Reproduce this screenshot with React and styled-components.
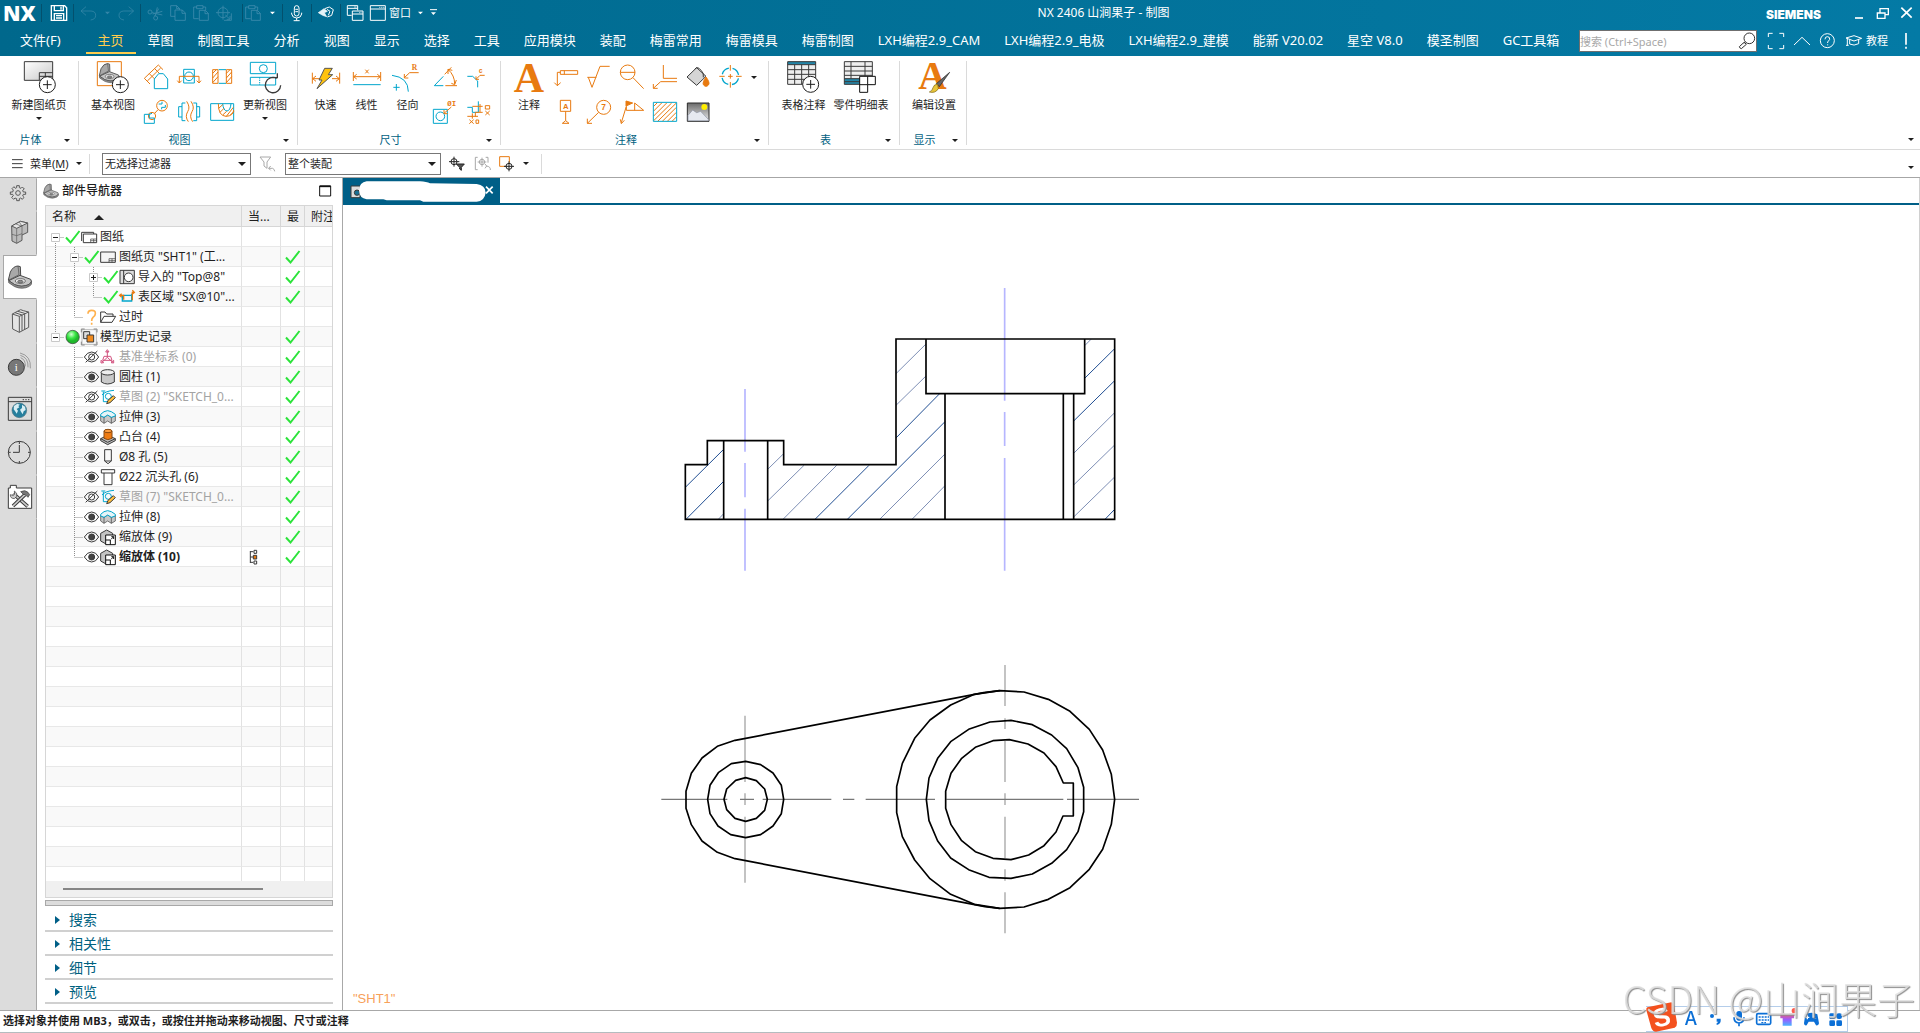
import React from "react";
import styled, { createGlobalStyle } from "styled-components";

const O = "#e87a10";
const C = "#00a5cc";
const K = "#3a3a3a";
const UI = '"Noto Sans", "Noto Sans CJK SC", sans-serif';

const Global = createGlobalStyle`
  * { box-sizing: border-box; }
  body { margin: 0; background: #fff; font-family: ${UI}; color: #1e1e1e; }
  button, input, select { font-family: inherit; margin: 0; }
  svg { display: block; flex: none; }
`;

/* ---------- shared parts ---------- */

const Shell = styled.div`
  display: flex;
  flex-direction: column;
  height: 100vh;
  overflow: hidden;
`;

const PlainButton = styled.button`
  display: flex;
  align-items: center;
  justify-content: center;
  flex: none;
  padding: 0;
  border: 0;
  background: none;
  color: inherit;
  font-size: 11px;
  line-height: 16px;
  white-space: nowrap;
`;

/* Icons are drawn on a grid three times finer than their displayed size. */
const ArtSvg = styled.svg`
  overflow: visible;
`;

const Art = ({ x = 0, y = 0, w, h, children, color = O, sw = 3 }) => (
  <ArtSvg
    width={w}
    height={h}
    viewBox={`${x} ${y} ${w * 3} ${h * 3}`}
    fill="none"
    stroke={color}
    strokeWidth={sw}
    aria-hidden="true"
  >
    {children}
  </ArtSvg>
);

const Caret = ({ color = "#1e1e1e", w = 6 }) => (
  <svg width={w} height={w / 2} viewBox="0 0 6 3" aria-hidden="true">
    <path d="M0 0H6L3 3Z" fill={color} />
  </svg>
);

/* ---------- header ---------- */

const Header = styled.header`
  flex: none;
  color: #fff;
  background: linear-gradient(90deg, #00688c, #047aa5);
`;

const TitleRow = styled.div`
  display: flex;
  align-items: center;
  height: 28px;
`;

const Logo = styled.div`
  width: 41px;
  padding: 0 0 2px 3px;
  font: 800 21px/24px "Open Sans", sans-serif;
`;

const QuickSep = styled.span`
  width: 1px;
  height: 18px;
  margin-bottom: 2px;
  background: #03506d;
`;

const QuickButton = styled(PlainButton)`
  height: 28px;
`;

const WindowLabel = styled.span`
  width: 26px;
  padding-bottom: 3px;
  text-align: left;
`;

const Title = styled.h1`
  flex: 1;
  margin: 0;
  padding-bottom: 2px;
  font-size: 12px;
  font-weight: 400;
  line-height: 18px;
  text-align: center;
`;

const Brand = styled.span`
  width: 82px;
  padding-top: 1px;
  font: 900 12px/18px Inter, sans-serif;
`;

const TabRow = styled.nav`
  display: flex;
  align-items: stretch;
  height: 28px;
`;

const Tab = styled(PlainButton)`
  margin-right: ${(p) => (p.$file ? 17 : 0)}px;
  padding: 0 ${(p) => (p.$file ? 8 : 12)}px 4px ${(p) => (p.$file ? 20 : 12)}px;
  font-size: 13px;
  line-height: 20px;
  color: ${(p) => (p.$active ? "#ffcc4d" : "#fff")};
  box-shadow: ${(p) => (p.$active ? "inset 0 -2px #00698d, inset 0 -4px #ffcc4d" : "none")};
`;

const SearchBox = styled.label`
  display: flex;
  align-items: center;
  flex: none;
  width: 178px;
  height: 22px;
  margin: 2px 2px 0 auto;
  border: 1px solid #6f6f6f;
  background: #fff;

  input {
    flex: 1;
    min-width: 0;
    height: 18px;
    padding: 0;
    border: 0;
    outline: 0;
    font-size: 11px;
    background: none;
  }
  input::placeholder {
    color: #a8a8a8;
    opacity: 1;
  }
`;

const HeaderButton = styled(PlainButton)`
  height: 28px;
`;

const TutorialLabel = styled.span`
  width: 31px;
  padding-bottom: 2px;
  text-align: left;
`;

const Q = "#4a93b3";
const quick = [
  "|",
  { n: "保存", x: 42, w: 31, art: <g stroke="#fff" strokeWidth="4"><path d="M154 17H194L200 23V61H154ZM163 17V32H190V17M183 20V29M163 61V41H191V61M168 47H186M168 54H186" /></g> },
  "|",
  { n: "撤消", x: 74, w: 27, art: <path d="M258 20L243 33L258 46M244 33H273Q287 34 287 46Q287 58 272 60" stroke={Q} opacity=".55" /> },
  { n: "撤消列表", x: 101, w: 13, art: <path d="M315 35H330L322 43Z" fill={Q} stroke="none" opacity=".7" /> },
  { n: "重做", x: 114, w: 26, art: <path d="M386 20L401 33L386 46M400 33H371Q357 34 357 46Q357 58 372 60" stroke={Q} opacity=".55" /> },
  "|",
  { n: "剪切", x: 141, w: 26, art: <g stroke={Q} opacity=".7"><circle cx="450" cy="36" r="6" /><circle cx="467" cy="54" r="6" /><path d="M456 38L487 45M466 48L472 22M458 42L487 34M464 48L476 26" /></g> },
  { n: "复制", x: 167, w: 23, art: <g stroke={Q} opacity=".7"><path d="M525 49H512V17H530L539 26V30M530 17V26H539M525 30H547L556 39V61H525ZM546 30V40H556" /></g> },
  { n: "粘贴", x: 190, w: 23, art: <g stroke={Q} opacity=".7"><path d="M596 56H581V21H590M609 21H617V30M590 17H609V26H590ZM598 31H616L625 40V61H598ZM615 31V41H625" /></g> },
  { n: "移动对象", x: 213, w: 29, art: <g stroke={Q} opacity=".7"><circle cx="669" cy="38" r="15" /><path d="M669 17V59M648 38H690M672 61H694V40M676 45L690 58M690 48V58H680" /></g> },
  "|",
  { n: "选择性粘贴", x: 243, w: 22, art: <g stroke={Q} opacity=".7"><path d="M752 56H737V21H746M765 21H773V30M746 17H765V26H746ZM754 31H772L781 40V61H754ZM771 31V41H781" /></g> },
  { n: "粘贴列表", x: 265, w: 17, art: <path d="M810 35H825L817 43Z" fill="#fff" stroke="none" /> },
  "|",
  { n: "语音", x: 283, w: 28, art: <g stroke="#fff"><rect x="883" y="17" width="14" height="31" rx="7" /><path d="M875 38V42Q877 54 890 54Q903 54 905 42V38M890 54V62M881 62H899M886 28H894M886 35H894" /></g> },
  "|",
  { n: "触摸模式", x: 312, w: 28, art: <g stroke="#fff"><path d="M974 26L988 21L1000 29L995 46L982 51" /><path d="M981 28L990 34L985 46" /><path d="M955 38L972 26L982 34L973 38L980 50L968 46Z" fill="#e4f2f7" strokeWidth="2" /></g> },
  "|",
  { n: "切换窗口", x: 341, w: 26, art: <g stroke="#fff"><path d="M1055 46H1042V17H1073V31M1042 25H1073M1057 33H1089V61H1057ZM1057 42H1089" /><path d="M1062 21H1071M1078 38H1087" strokeDasharray="2 2" /></g> },
];

const QuickAccess = () => (
  <>
    <Logo>NX</Logo>
    {quick.map((q, i) =>
      q === "|" ? (
        <QuickSep key={i} />
      ) : (
        <QuickButton key={i} aria-label={q.n}>
          <Art x={q.x * 3} y={0} w={q.w} h={28}>{q.art}</Art>
        </QuickButton>
      )
    )}
    <QuickButton>
      <Art x={1101} w={22} h={28} color="#fff"><path d="M1111 17H1156V61H1111ZM1111 27H1156" /><path d="M1138 22H1153" strokeDasharray="3 3" /></Art>
      <WindowLabel>窗口</WindowLabel>
    </QuickButton>
    <QuickButton aria-label="窗口列表">
      <Art x={1242} w={12} h={28}><path d="M1251 35H1266L1258 43Z" fill="#fff" stroke="none" /></Art>
    </QuickButton>
    <QuickButton aria-label="工具条选项">
      <Art x={1278} w={14} h={28} color="#fff"><path d="M1287 29H1308" /><path d="M1290 37H1305L1297 45Z" fill="#fff" stroke="none" /></Art>
    </QuickButton>
  </>
);

const tabs = [
  "文件(F)", "主页", "草图", "制图工具", "分析", "视图", "显示", "选择", "工具", "应用模块", "装配",
  "梅雷常用", "梅雷模具", "梅雷制图", "LXH编程2.9_CAM", "LXH编程2.9_电极", "LXH编程2.9_建模",
  "能新 V20.02", "星空 V8.0", "模圣制图", "GC工具箱",
];

/* ---------- ribbon ---------- */

const Ribbon = styled.section`
  display: flex;
  flex: none;
  height: 94px;
  padding: 5px 0 4px;
  border-bottom: 1px solid #dadada;
`;

const Group = styled.div`
  display: flex;
  flex-direction: column;
  flex: none;
  border-right: 1px solid #dadada;
`;

const GroupBody = styled.div`
  display: flex;
  flex: 1;
  align-items: flex-start;
  padding: 0 ${(p) => p.$right}px 0 ${(p) => p.$left}px;
`;

const GroupFoot = styled.div`
  display: flex;
  align-items: center;
  height: 16px;
  margin-bottom: -3px;
  padding-right: 8px;
  font-size: 11px;
  line-height: 16px;
  color: #00617f;

  span {
    flex: 1;
    padding-right: 3px;
    text-align: center;
  }
`;

const BigButton = styled(PlainButton)`
  flex-direction: column;
  width: ${(p) => p.$w}px;
`;

const BigLabel = styled.span`
  padding-bottom: 4px;
`;

const IconGrid = styled.div`
  display: grid;
  grid-template-columns: repeat(${(p) => p.$cols}, 33px);
  grid-auto-rows: 35px;
`;

const MoreButton = styled(PlainButton)`
  width: 14px;
  height: 32px;
`;

const RibbonEnd = styled.div`
  display: flex;
  flex: 1;
  align-items: flex-end;
  justify-content: flex-end;
  padding: 0 6px 4px 0;
`;

const Plus = ({ x, y }) => (
  <g stroke="#1e1e1e">
    <circle cx={x} cy={y} r="24" fill="#fff" />
    <path d={`M${x - 13} ${y}H${x + 13}M${x} ${y - 13}V${y + 13}`} />
  </g>
);

const Big = ({ x, w, label, menu, children }) => (
  <BigButton $w={w}>
    <Art x={x} y={183} w={w} h={36}>{children}</Art>
    <BigLabel>{label}</BigLabel>
    {menu && <Caret />}
  </BigButton>
);

const Small = ({ x, row, label, children }) => (
  <PlainButton aria-label={label}>
    <Art x={x} y={row ? 288 : 183} w={33} h={35}>{children}</Art>
  </PlainButton>
);

const RibbonGroup = ({ label, left = 0, right = 0, children }) => (
  <Group>
    <GroupBody $left={left} $right={right}>{children}</GroupBody>
    <GroupFoot>
      <span>{label}</span>
      <Caret />
    </GroupFoot>
  </Group>
);

const Bracket = ({ s = 1, x = 0, y = 0 }) => (
  <g transform={`translate(${x} ${y}) scale(${s})`} stroke="#4a4a4a" strokeWidth="3" strokeLinejoin="round">
    <path d="M1 44L7 20Q16 2 30 2L37 4L38 30L10 50Z" fill="#a8a8a8" />
    <path d="M30 2L33 28L3 44" strokeWidth="2" />
    <path d="M2 46L36 30L68 42Q75 48 64 57Q42 68 20 58Z" fill="#c4c4c4" />
    <path d="M2 46V52L20 64Q44 74 64 63Q74 57 70 48Q68 56 60 59Q40 67 20 58Z" fill="#8c8c8c" strokeWidth="2" />
    <ellipse cx="37" cy="47" rx="15" ry="7" fill="#e6e6e6" strokeWidth="2" />
    <ellipse cx="37" cy="49" rx="8" ry="4" fill="#8c8c8c" strokeWidth="2" />
  </g>
);

const RibbonBar = () => (
  <Ribbon aria-label="主页">
    <RibbonGroup label="片体">
      <Big x={0} w={78} label="新建图纸页" menu>
        <defs>
          <linearGradient id="sheet" x1="0" y1="0" x2="1" y2="1"><stop offset="0" stopColor="#fff" /><stop offset="1" stopColor="#c8c8c8" /></linearGradient>
        </defs>
        <path d="M73 185H158V241H73Z" fill="url(#sheet)" stroke={K} />
        <path d="M118 240V218H158M118 229H158M136 218V240" stroke={K} />
        <Plus x={142} y={254} />
      </Big>
    </RibbonGroup>

    <RibbonGroup label="视图" left={8} right={5}>
      <Big x={261} w={52} label="基本视图">
        <path d="M292 185H364V257H292Z" />
        <Bracket x={297} y={189} s={0.86} />
        <Plus x={361} y={254} />
      </Big>
      <IconGrid $cols={3}>
        <Small x={417} label="投影视图"><path d="M433 235L475 195L489 209M433 235L450 252M448 221L464 237M464 206L478 220M442 243L482 204" /><path d="M463 237L476 221H490L503 237V266H463Z" stroke={C} /></Small>
        <Small x={516} label="剖视图"><path d="M551 208H583V249H551Z" stroke={C} /><circle cx="567" cy="229" r="13" stroke={C} /><path d="M538 229V249M532 242L538 249L545 242M538 229H597V249M590 242L597 249L603 242" /></Small>
        <Small x={615} label="断开视图"><path d="M638 209H654V250H638ZM679 209H695V250H679Z" /><path d="M638 220L649 209M638 234L654 216M638 248L654 230M679 220L690 209M679 234L695 216M679 248L695 230" /><path d="M656 209H678M656 250H678" stroke={C} /></Small>
        <Small row x={417} label="局部放大图"><circle cx="486" cy="317" r="16" /><circle cx="456" cy="348" r="11" /><path d="M464 340L474 329" /><path d="M476 312H486V305M496 315V322H485V328M433 343H448V354H463V370H433ZM448 343L456 340" stroke={C} /></Small>
        <Small row x={516} label="断裂视图"><path d="M556 309H546V362H556M546 320H536V351H546M580 309H590V362H580M590 320H599V351H590" stroke={C} /><path d="M560 304Q572 322 563 335Q554 350 565 365M573 304Q585 322 576 335Q567 350 578 365" /></Small>
        <Small row x={615} label="局部剖视图"><path d="M632 311H701V361H632Z" stroke={C} /><path d="M655 311Q655 348 678 349Q700 348 701 330" /><path d="M668 311Q670 332 681 333Q691 332 693 311" stroke={C} /><path d="M656 325L668 314M660 337L672 325M668 345L680 334M679 349L700 322M691 345L701 335" /></Small>
      </IconGrid>
      <Big x={714} w={54} label="更新视图" menu>
        <path d="M751 187H827V221H751ZM751 232H827V255H751Z" stroke={C} /><circle cx="790" cy="206" r="12" stroke={C} /><path d="M779 232V255" stroke={C} strokeDasharray="4 3" />
        <path d="M830 235A23 23 0 1 0 842 256M818 233H832V220" stroke={K} strokeWidth="4" />
      </Big>
    </RibbonGroup>

    <RibbonGroup label="尺寸" left={7} right={6}>
      <Big x={915} w={41} label="快速">
        <path d="M937 218V251M1019 218V251M938 236H960M948 228L938 236L948 244M996 236H1018M1008 228L1018 236L1008 244" />
        <path d="M974 205H997L985 224H998L951 266L966 240H957Z" fill="#ffc20e" stroke="#555" />
      </Big>
      <Big x={1038} w={41} label="线性">
        <path d="M1060 216V243M1142 216V243M1061 230H1141M1070 223L1061 230L1070 237M1132 223L1141 230L1132 237M1096 209L1106 220M1106 209L1096 220" />
        <path d="M1060 254H1142" stroke={C} />
      </Big>
      <Big x={1161} w={41} label="径向">
        <path d="M1176 226Q1225 232 1225 275M1180 262H1199M1189 252V272" stroke={C} />
        <path d="M1256 218H1229L1213 233M1213 222V234H1225" /><text x="1235" y="211" fontSize="23" fontWeight="700" fill={O} stroke="none" fontFamily="Liberation Serif, serif">R</text>
      </Big>
      <IconGrid $cols={2}>
        <Small x={1284} label="角度"><path d="M1303 257L1330 229M1303 257H1330" stroke={C} /><path d="M1334 223L1354 202M1336 257H1371M1344 208Q1364 226 1364 252M1344 222V208L1357 211M1354 250L1364 254L1369 240" /></Small>
        <Small x={1383} label="倒斜角"><path d="M1402 229H1418L1433 243V262" stroke={C} /><path d="M1454 226H1440L1428 238M1428 229V238H1437" /><text x="1436" y="220" fontSize="20" fontWeight="700" fill={O} stroke="none" fontFamily="Liberation Mono, monospace">c</text></Small>
        <Small row x={1284} label="孔和螺纹标注"><path d="M1300 328H1342V370H1300Z" stroke={C} /><circle cx="1321" cy="349" r="13" stroke={C} /><path d="M1354 321L1332 340M1332 330V341H1343" /><text x="1342" y="317" fontSize="22" fontWeight="700" fill={O} stroke="none" fontFamily="Liberation Mono, monospace">ØI</text></Small>
        <Small row x={1383} label="坐标"><path d="M1402 322H1417V337H1435V304" stroke={C} /><path d="M1417 319H1448M1440 312V337M1448 337H1426V350M1402 349H1434M1417 340V356M1456 317H1469V327H1456ZM1456 333L1469 345M1469 333L1456 345M1408 359L1421 371M1421 359L1408 371M1428 360H1436V370H1428Z" /></Small>
      </IconGrid>
    </RibbonGroup>

    <RibbonGroup label="注释" left={8} right={7}>
      <Big x={27} w={40} label="注释">
        <text x="87" y="275" fontSize="126" fontWeight="700" textAnchor="middle" fill={O} stroke="none" fontFamily="Liberation Serif, serif">A</text>
      </Big>
      <IconGrid $cols={6}>
        <Small x={147} label="特征控制框"><path d="M181 212H233V223H181ZM193 212V223M181 217H172V257M163 248L172 257L182 248" /></Small>
        <Small x={246} label="表面粗糙度"><path d="M262 232H289M265 232L276 262L300 199H329" /></Small>
        <Small x={345} label="基准目标"><circle cx="383" cy="217" r="22" /><path d="M361 217H405M399 233L431 266" /></Small>
        <Small x={444} label="焊接符号"><path d="M490 195V235H531M531 245H482L460 265M460 252V265H473" /></Small>
        <Small x={543} label="填充"><path d="M561 231L590 203L618 229L590 256Z" fill="#d5d5d5" stroke={K} /><path d="M584 208Q592 196 604 212Q612 218 610 232" stroke={K} /><path d="M618 231Q630 247 626 254Q618 264 610 254Q607 247 618 231Z" fill={O} /></Small>
        <Small x={642} label="中心标记"><circle cx="691" cy="229" r="25" stroke={C} strokeDasharray="28 11.270" strokeDashoffset="-6" strokeWidth="4" /><path d="M691 195V212M691 222V236M691 246V263M658 229H674M684 229H698M708 229H725" /></Small>
        <Small row x={147} label="基准特征符号"><path d="M181 301H212V334H181ZM197 334V362M187 370H207L197 362Z" /><text x="197" y="327" fontSize="23" fontWeight="700" textAnchor="middle" fill={O} stroke="none" fontFamily="Liberation Sans, sans-serif">A</text></Small>
        <Small row x={246} label="符号标注"><circle cx="311" cy="322" r="21" /><path d="M296 337L262 370M262 356V370H276" /><text x="311" y="331" fontSize="25" fontWeight="700" textAnchor="middle" fill={O} stroke="none" fontFamily="Liberation Sans, sans-serif">7</text></Small>
        <Small row x={345} label="焊接标注"><path d="M379 331H431L404 309V331M379 331V319L364 368M361 358L364 371L373 361" /><path d="M378 303L398 309L378 318Z" fill={O} /></Small>
        <Small row x={444} label="剖面线"><path d="M461 319L472 308M461 333L486 308M461 348L500 309M461 362L515 309M473 364L529 309M487 364L529 322M502 364L529 337M516 364L529 351" /><path d="M460 307H530V364H460Z" stroke={C} /></Small>
        <Small row x={543} label="图像"><defs><linearGradient id="sky" x1="0" y1="0" x2="0" y2="1"><stop offset="0" stopColor="#6a6a6a" /><stop offset="1" stopColor="#eee" /></linearGradient></defs><path d="M562 309H627V364H562Z" fill="url(#sky)" stroke="#2a2a2a" /><path d="M564 362V346L578 330L590 338L602 334L625 358V362Z" fill="#e6e9f0" stroke="#8a90a0" strokeWidth="2" /><circle cx="613" cy="321" r="9" fill="#ffee00" stroke="none" /></Small>
      </IconGrid>
      <MoreButton aria-label="更多注释"><Caret /></MoreButton>
    </RibbonGroup>

    <RibbonGroup label="表" left={6} right={9}>
      <Big x={825} w={57} label="表格注释">
        <path d="M863 185H947V253H863Z" fill="#eee" stroke="none" /><path d="M863 185H947V194H863Z" fill="#2385a8" stroke="none" />
        <path d="M863 185H947V253H863ZM863 194H947M863 209H947M863 223H947M863 238H947M884 194V253M905 194V253M926 194V253" stroke={K} />
        <Plus x={932} y={253} />
      </Big>
      <Big x={996} w={58} label="零件明细表">
        <path d="M1033 185H1117V253H1033Z" fill="#eee" stroke="none" /><path d="M1033 236H1117V253H1033Z" fill="#2385a8" stroke="none" />
        <path d="M1033 185H1117V253H1033ZM1033 199H1117M1033 213H1117M1033 226H1117M1033 236H1117M1053 185V236M1095 185V236M1033 245H1080" stroke={K} />
        <path d="M1079 229H1126V254H1103V277H1079ZM1079 254H1103M1103 229V254" fill="#fff" stroke="#111" />
      </Big>
    </RibbonGroup>

    <RibbonGroup label="显示" left={5} right={3}>
      <Big x={1215} w={58} label="编辑设置">
        <text x="1297" y="267" fontSize="118" fontWeight="700" textAnchor="middle" fill={O} stroke="none" fontFamily="Liberation Serif, serif">A</text>
        <path d="M1349 217L1309 251L1318 260Z" fill="#666" stroke="#222" strokeWidth="2" />
        <path d="M1313 253Q1302 252 1299 263Q1297 273 1288 276Q1306 281 1315 266Z" fill="#e8c63a" stroke="#7a6210" strokeWidth="2" />
      </Big>
    </RibbonGroup>
    <RibbonEnd><Caret w={6} /></RibbonEnd>
  </Ribbon>
);

/* ---------- selection bar ---------- */

const SelectionBar = styled.div`
  display: flex;
  align-items: center;
  flex: none;
  height: 28px;
  padding: 0 6px 0 12px;
  border-bottom: 1px solid #a6a6a6;
`;

const MenuButton = styled(PlainButton)`
  gap: 7px;
  width: 70px;
  justify-content: flex-start;

  u { text-underline-offset: 2px; }
`;

const BarSep = styled.span`
  width: 1px;
  height: 20px;
  margin: 0 12px 0 ${(p) => p.$before}px;
  background: #dadada;
`;

const SelectBox = styled.div`
  display: grid;
  align-items: center;
  width: ${(p) => p.$w}px;
  height: 22px;
  border: 1px solid #777;

  > * { grid-area: 1 / 1; }
  > svg {
    justify-self: end;
    margin-right: 4px;
    pointer-events: none;
  }
  select {
    width: 100%;
    height: 20px;
    padding: 0 2px;
    border: 0;
    outline: 0;
    appearance: none;
    background: none;
    color: #1e1e1e;
    font-size: 11px;
  }
`;

const BarEnd = styled.span`
  margin: 8px 0 0 auto;
`;

const Selection = () => (
  <SelectionBar>
    <MenuButton>
      <Art w={11} h={10} color={K}><path d="M0 2H32M0 14H32M0 26H32" /></Art>
      <span>菜单(<u>M</u>)</span>
      <Caret />
    </MenuButton>
    <BarSep $before={7} />
    <SelectBox $w={149}>
      <select aria-label="选择过滤器"><option>无选择过滤器</option></select>
      <Caret w={8} />
    </SelectBox>
    <PlainButton aria-label="重置过滤器">
      <Art x={753} y={453} w={34} h={26} color="#a8a8a8"><path d="M780 471H812L801 486V505L792 498V486ZM806 505L812 511M806 505L812 498M806 505H818Q824 508 824 514" /></Art>
    </PlainButton>
    <SelectBox $w={156}>
      <select aria-label="选择范围"><option>整个装配</option></select>
      <Caret w={8} />
    </SelectBox>
    <PlainButton aria-label="捕捉过滤">
      <Art x={1323} y={453} w={29} h={26} color="#222"><circle cx="1362" cy="485" r="9" /><path d="M1362 470V500M1347 485H1378" /><path d="M1369 492H1393L1384 502V511L1379 507V502Z" fill="#555" /></Art>
    </PlainButton>
    <PlainButton aria-label="捕捉重置">
      <Art x={1410} y={453} w={24} h={26} color="#a8a8a8"><path d="M1433 472H1426V509H1433M1457 472H1464V488" /><circle cx="1446" cy="486" r="8" /><path d="M1446 473V500M1433 486H1459M1460 498L1455 492M1460 498L1455 505M1460 498Q1472 500 1471 510" /></Art>
    </PlainButton>
    <PlainButton aria-label="点构造">
      <Art x={1482} y={453} w={29} h={26}><path d="M1518 499H1499V470H1528V488" /><circle cx="1527" cy="499" r="9" stroke="#222" /><path d="M1527 484V514M1512 499H1542" stroke="#222" /></Art>
    </PlainButton>
    <PlainButton aria-label="点选项"><Caret /></PlainButton>
    <BarSep $before={12} />
    <BarEnd><Caret /></BarEnd>
  </SelectionBar>
);

/* ---------- work area ---------- */

const Work = styled.div`
  display: flex;
  flex: 1;
  min-height: 0;
`;

const ResourceBar = styled.nav`
  display: flex;
  flex-direction: column;
  flex: none;
  width: 37px;
  background: #dcdcdc;
`;

const ResourceButton = styled(PlainButton)`
  justify-content: flex-start;
  height: ${(p) => (p.$first ? 33 : 44)}px;
  margin-left: 3px;
  border: 1px solid transparent;
  border-right-color: #a8a8a8;
  ${(p) => p.$active && "background: #fff; border-color: #a8a8a8 #fff #a8a8a8 #a8a8a8;"}
`;

const ResourceFill = styled.div`
  flex: 1;
  border-right: 1px solid #a8a8a8;
`;

const G = "#5a5a5a";
const resources = [
  { n: "资源条选项", h: 31, x: 12, y: 12, art: <g stroke={G}><circle cx="54" cy="54" r="7" /><path d="M50 38V32H58V38L63 40L67 36L73 42L68 46L70 51H77V58H70L68 63L72 67L67 73L62 69L58 71V77H50V71L45 69L41 73L35 67L40 62L38 58H31V51H38L40 45L36 41L42 35L46 40Z" /></g> },
  { n: "装配导航器", x: 12, y: 111, art: <g stroke={G} strokeLinejoin="round"><path d="M35 153L61 139L83 144V172L66 180V196L50 205L36 198Z" fill="#bbb" /><path d="M35 153L61 139L83 144L50 160Z" fill="#e6e6e6" /><path d="M50 160V205M50 182L66 176M36 178L50 182M66 154V180M58 141L66 154L48 147" strokeWidth="2" /></g> },
  { n: "部件导航器", active: true, x: 12, y: 243, art: <Bracket x={24} y={271} /> },
  { n: "重用库", x: 12, y: 375, art: <g stroke={G} fill="#e4e4e4" strokeLinejoin="round"><path d="M37 417L62 404L70 407L86 411V457L58 472L38 462Z" /><path d="M37 417L58 424V472M58 424L86 411M45 413L66 420V467M53 409L74 415V463" fill="none" /></g> },
  { n: "HD3D 工具", x: 12, y: 507, art: <g stroke="#999"><path d="M62 548Q77 554 76 574M61 541Q86 548 84 577M60 534Q94 542 91 580" /><circle cx="49" cy="577" r="24" fill="#777" stroke={K} /><text x="49" y="588" textAnchor="middle" fontSize="33" fill="#fff" stroke="none" fontFamily="Liberation Serif, serif">i</text></g> },
  { n: "Web 浏览器", x: 12, y: 54, art: <g stroke={K}><path d="M25 82H95V151H25ZM25 95H95" /><path d="M68 89H92" strokeDasharray="4 4" /><circle cx="58" cy="121" r="22" fill="#267f9d" stroke="#4d7483" strokeWidth="2" /><path d="M42 108L52 101L60 104L55 108L58 112L50 117L54 122L50 131L47 126L41 118ZM66 104L75 110L77 120L71 124L68 133L63 125L60 119L66 114Z" fill="#d8eef4" stroke="none" /></g> },
  { n: "历史记录", x: 12, y: 186, art: <g stroke={K}><circle cx="58" cy="247" r="33" /><path d="M58 225V247H39M58 214V222M58 273V280M25 247H32M84 247H91" /></g> },
  { n: "加工向导", x: 12, y: 318, art: <g stroke={K} strokeLinejoin="round"><path d="M25 415V354H31V346H49V354H95V415Z" fill="#fff" strokeWidth="3" /><path d="M40 371L83 409" strokeWidth="11" /><path d="M40 371L83 409" strokeWidth="5" stroke="#ccc" /><path d="M31 374Q30 385 43 386L50 379Q53 368 43 363L44 373Q40 379 31 374Z" fill="#ccc" strokeWidth="2" /><path d="M75 374L39 408" strokeWidth="11" /><path d="M75 374L39 408" strokeWidth="5" stroke="#ccc" /><path d="M62 365Q76 358 84 367L89 374L84 382L76 374L70 373Z" fill="#777" strokeWidth="2" /></g> },
];

const Panel = styled.aside`
  display: flex;
  flex-direction: column;
  flex: none;
  width: 306px;
  padding: 0 9px 6px 8px;
  border-right: 1px solid #a8a8a8;
`;

const PanelTitle = styled.h2`
  display: flex;
  align-items: center;
  height: 27px;
  margin: 0 0 0 -3px;
  padding-bottom: 2px;
  font-size: 12px;
  font-weight: 500;
  line-height: 18px;

  span { flex: 1; }
`;

const TreeBox = styled.div`
  display: flex;
  flex-direction: column;
  flex: 1;
  min-height: 0;
  border: 1px solid #d6d6d6;
`;

const TreeScroll = styled.div`
  flex: 1;
  min-height: 0;
  overflow: hidden;
`;

const TreeTable = styled.table`
  width: 100%;
  table-layout: fixed;
  border-collapse: separate;
  border-spacing: 0;
  font-size: 12px;
  line-height: 18px;

  th, td {
    height: 20px;
    padding: 0;
    border-right: 1px solid #e2e2e2;
    border-bottom: 1px solid #e8e8e8;
    text-align: left;
    white-space: nowrap;
    overflow: hidden;
  }
  th {
    height: 21px;
    padding: 2px 0 0 6px;
    border-color: #d6d6d6;
    background: #f0f0f0;
    font-weight: 400;
  }
  th:last-child, td:last-child { border-right: 0; }
  tbody tr:nth-child(even) { background: #f9f9f9; }
`;

const HeadLabel = styled.span`
  display: flex;
  align-items: center;
  gap: 18px;
`;

const NameCell = styled.div`
  display: flex;
  align-items: center;
  height: 19px;
  color: ${(p) => (p.$dim ? "#a3a3a3" : "#1e1e1e")};
  font-weight: ${(p) => (p.$bold ? 700 : 400)};

  span { padding-left: 2px; }
`;

const TickCell = styled.div`
  display: flex;
  padding-left: 4px;
`;

const ScrollTrack = styled.div`
  flex: none;
  height: 16px;
  padding: 7px 69px 0 17px;
  background: #f0f0f0;

  &::before {
    content: "";
    display: block;
    height: 2px;
    background: #868686;
  }
`;

const Splitter = styled.div`
  flex: none;
  height: 6px;
  margin: 2px 0;
  border: 1px solid #a8a8a8;
  background: #dcdcdc;
`;

const Section = styled(PlainButton)`
  justify-content: flex-start;
  gap: 9px;
  height: 24px;
  padding: 2px 0 0 10px;
  border-bottom: 2px solid #d0d0d0;
  color: #00617f;
  font-size: 14px;
  line-height: 18px;
`;

const Guides = ({ level, v, box }) => {
  const w = 19 + 19 * level;
  const cx = 9.5 + 19 * level;
  return (
    <svg width={w} height="20" viewBox={`0 0 ${w} 20`} fill="none" stroke="#8c8c8c" aria-hidden="true">
      {v.map(([l, a, b]) => (
        <path key={l} d={`M${9.5 + 19 * l} ${a}V${b}`} strokeDasharray="1 1" />
      ))}
      <path d={`M${cx} 10.5H${w - 1}`} strokeDasharray="1 1" />
      {box && (
        <>
          <path d={`M${cx - 4} 6.5h8v8h-8z`} fill="#fff" stroke="#c8c8c8" />
          <path d={`M${cx - 2.5} 10.5h5${box === "+" ? "m-2.5 -2.5v5" : ""}`} stroke="#222" />
        </>
      )}
    </svg>
  );
};

const Check = () => (
  <svg width="16" height="19" viewBox="0 0 16 19" fill="none" aria-hidden="true">
    <path d="M1 10.500L5.500 15.500L14.500 4" stroke="#2be33a" strokeWidth="2" />
  </svg>
);

const Eye = ({ off }) => (
  <Art w={16} h={19} color={K}>
    <path d="M1 30Q10 15 23 15Q36 15 44 30Q36 45 23 45Q10 45 1 30Z" />
    <circle cx="23" cy="30" r="9" fill={off ? "none" : "#444"} />
    {off && <path d="M5 46L40 12" />}
  </Art>
);

const statusArt = {
  check: <Check />,
  eye: <Eye />,
  hidden: <Eye off />,
  question: <Art w={16} h={19} color="#ffb14d" sw={5}><path d="M12 20Q12 10 23 10Q35 10 34 20Q34 26 27 31Q23 35 23 42M23 47V53" /></Art>,
  ball: <Art w={16} h={19} color="#3a3a3a" sw={2}><defs><radialGradient id="ball" cx=".4" cy=".3"><stop offset="0" stopColor="#d4ffd4" /><stop offset=".6" stopColor="#3ae645" /><stop offset="1" stopColor="#1fb82b" /></radialGradient></defs><circle cx="23" cy="30" r="20" fill="url(#ball)" /></Art>,
};

const nodeArt = {
  sheets: <g stroke={K}><path d="M2 42V16H38V21M7 47V21H47V47Z" /><path d="M29 47V36H47M29 41H47M38 36V47" strokeWidth="2" /></g>,
  sheet: <g stroke={K}><path d="M2 15H46V46H2Z" fill="#f4f4f4" /><path d="M27 46V35H46M27 41H46M36 35V46" strokeWidth="2" /></g>,
  imported: <g stroke={K}><path d="M3 10H46V50H3Z" fill="#ddd" /><path d="M14 10V50" /><circle cx="29" cy="31" r="13" fill="#fff" /></g>,
  region: <g strokeWidth="4"><path d="M10 25V42H38V20M10 25H38" stroke={C} /><path d="M1 25H14V38M8 20L2 25L8 31M40 40V16H46M40 10L46 16L40 21" /></g>,
  folder: <g stroke={K}><path d="M2 46V15H15L20 21H39V28M2 46L12 28H47L36 46Z" /></g>,
  history: <g><path d="M3 8H46V52H3Z" stroke="#bbb" /><path d="M1 16V6H11M38 6H48V16M48 44V54H38M11 54H1V44" stroke="#888" /><path d="M8 14H26V35H8Z" fill="#ddd" stroke={K} /><path d="M18 24H38V45H18Z" fill="#f08a1d" stroke={K} /></g>,
  csys: <g stroke="#d2527f"><path d="M22 12V31L6 46M22 31L38 46M22 8L17 15H27ZM3 48V40L11 47ZM41 48V40L33 47ZM12 28H32L36 40H8Z" /></g>,
  cylinder: <g stroke={K}><path d="M4 17V45Q22 57 43 45V17" fill="#c9c9c9" /><ellipse cx="23" cy="16" rx="20" ry="8" fill="#eee" /></g>,
  sketch: <g><path d="M4 12H16M10 14V44H22M6 24Q16 12 42 10" stroke={C} /><circle cx="25" cy="28" r="9" stroke={C} /><path d="M20 50L24 40L40 26L46 32L30 47Z" fill="#ffbe3d" stroke={K} /></g>,
  extrude: <g strokeLinejoin="round"><path d="M2 26V42L12 49L23 42L34 49L46 42V26L34 31L23 24L12 31Z" fill="#c8c8c8" stroke={K} strokeWidth="2" /><path d="M12 31V49M34 31V49" stroke={K} strokeWidth="2" /><path d="M2 22L12 14L23 11L34 14L46 22V27L34 31L23 24L12 31L2 27Z" fill="#e6f4f8" stroke={C} /></g>,
  boss: <g stroke={K}><path d="M2 35L23 25L46 35V41L23 53L2 41Z" fill="#bbb" /><path d="M2 35L23 46L46 35" /><path d="M12 12V34Q23 42 36 34V12" fill="#ee7b12" stroke="#8a4a10" /><ellipse cx="24" cy="12" rx="12" ry="5" fill="#ff9e40" stroke="#8a4a10" /></g>,
  hole: <g stroke={K}><path d="M14 8H34V42L24 50L14 42ZM14 42H34" /></g>,
  cbore: <g stroke={K}><path d="M4 8H44V18H36V53H12V18H4ZM12 18H36" /></g>,
  scale: <g stroke={K}><path d="M2 19L20 9L38 19V42L20 52L2 42Z" fill="#c4c4c4" /><path d="M17 24H46V53H17Z" fill="#fff" stroke="#111" /><path d="M17 39H31V53M33 37L41 29M34 29H41V36" stroke="#111" /></g>,
};

const F = 20, H = 10;
const nodes = [
  { level: 0, v: [[0, H, F]], box: "-", status: "check", icon: "sheets", text: "图纸" },
  { level: 1, v: [[0, 0, F], [1, 0, F]], box: "-", status: "check", icon: "sheet", text: '图纸页 "SHT1" (工...', ok: true },
  { level: 2, v: [[0, 0, F], [1, 0, F], [2, 0, F]], box: "+", status: "check", icon: "imported", text: '导入的 "Top@8"', ok: true },
  { level: 2, v: [[0, 0, F], [1, 0, F], [2, 0, H]], status: "check", icon: "region", text: '表区域 "SX@10"...', ok: true },
  { level: 1, v: [[0, 0, F], [1, 0, H]], status: "question", icon: "folder", text: "过时" },
  { level: 0, v: [[0, 0, H]], box: "-", status: "ball", icon: "history", text: "模型历史记录", ok: true },
  ...[
    ["hidden", "csys", "基准坐标系 (0)"],
    ["eye", "cylinder", "圆柱 (1)"],
    ["hidden", "sketch", '草图 (2) "SKETCH_0...'],
    ["eye", "extrude", "拉伸 (3)"],
    ["eye", "boss", "凸台 (4)"],
    ["eye", "hole", "Ø8 孔 (5)"],
    ["eye", "cbore", "Ø22 沉头孔 (6)"],
    ["hidden", "sketch", '草图 (7) "SKETCH_0...'],
    ["eye", "extrude", "拉伸 (8)"],
    ["eye", "scale", "缩放体 (9)"],
    ["eye", "scale", "缩放体 (10)"],
  ].map(([status, icon, text], i) => ({
    level: 1, v: [[1, 0, i === 10 ? H : F]], status, icon, text, ok: true, current: i === 10,
  })),
];
const blanks = Array.from({ length: 40 });

const Navigator = () => (
  <Panel>
    <PanelTitle>
      <Art w={20} h={20}><Bracket x={4} y={8} s={0.64} /></Art>
      <span>部件导航器</span>
      <PlainButton aria-label="最大化面板">
        <Art w={14} h={12} color="#111"><path d="M2 3H35V33H2Z" /><path d="M2 4H35" strokeWidth="5" /></Art>
      </PlainButton>
    </PanelTitle>
    <TreeBox>
      <TreeScroll>
        <TreeTable>
          <colgroup><col width="196" /><col width="39" /><col width="24" /><col /></colgroup>
          <thead>
            <tr>
              <th><HeadLabel>名称 <svg width="10" height="5" viewBox="0 0 10 5" aria-hidden="true"><path d="M0 5L5 0L10 5Z" fill="#222" /></svg></HeadLabel></th>
              <th>当...</th>
              <th>最</th>
              <th>附注</th>
            </tr>
          </thead>
          <tbody>
            {nodes.map((n) => (
              <tr key={n.text}>
                <td>
                  <NameCell $dim={n.status === "hidden"} $bold={n.current}>
                    <Guides level={n.level} v={n.v} box={n.box} />
                    {statusArt[n.status]}
                    <Art w={17} h={19}>{nodeArt[n.icon]}</Art>
                    <span>{n.text}</span>
                  </NameCell>
                </td>
                <td>
                  {n.current && (
                    <Art w={17} h={19} color={K}><path d="M25 12V48M25 30H34M25 14H34M25 46H34" /><path d="M36 10H44V19H36ZM36 42H44V51H36Z" /><path d="M34 25H44V36H34Z" fill={O} /></Art>
                  )}
                </td>
                <td>{n.ok && <TickCell><Check /></TickCell>}</td>
                <td />
              </tr>
            ))}
            {blanks.map((_, i) => (
              <tr key={i}><td /><td /><td /><td /></tr>
            ))}
          </tbody>
        </TreeTable>
      </TreeScroll>
      <ScrollTrack />
    </TreeBox>
    <Splitter />
    {["搜索", "相关性", "细节", "预览"].map((s) => (
      <Section key={s}>
        <svg width="5" height="8" viewBox="0 0 5 8" aria-hidden="true"><path d="M0 0L5 4L0 8Z" fill="#005f87" /></svg>
        {s}
      </Section>
    ))}
  </Panel>
);

/* ---------- drawing canvas ---------- */

const Stage = styled.main`
  display: flex;
  flex-direction: column;
  flex: 1;
  min-width: 0;
  border-right: 1px solid #d0d0d0;
`;

const DocTabs = styled.div`
  display: flex;
  height: 27px;
  border-bottom: 2px solid #005f87;
`;

const DocTab = styled.div`
  display: flex;
  align-items: center;
  width: 157px;
  background: #005f87;
`;

const Sheet = styled.div`
  position: relative;
  flex: 1;
  min-height: 0;
`;

const SheetName = styled.span`
  position: absolute;
  left: 10px;
  bottom: 3px;
  color: #f7a15a;
  font: 13px/16px "Liberation Sans", sans-serif;
`;

const dark = [
  "76 652L191 538", "78 748L191 634", "465 748L627 586", "562 748L855 455", "708 504L838 372",
  "1274 325L1364 236", "1241 453L1364 332", "1335 748L1364 718",
];
const light = [
  "175 748L191 731", "323 598L371 551", "323 693L432 586", "369 748L530 586", "659 748L855 552",
  "756 748L855 647", "708 311L798 222", "708 406L798 318", "1274 227L1293 208", "1241 550L1364 428",
  "1241 645L1364 525", "1241 741L1364 621",
];

const Drawing = () => (
  <svg width="100%" height="100%" fill="none" role="img" aria-label="零件剖视图与俯视图">
    <g transform="translate(317 65) scale(.33333)">
      <path d={dark.map((d) => `M${d}`).join("")} stroke="#1f4d92" strokeWidth="3" />
      <path d={light.map((d) => `M${d}`).join("")} stroke="#7d8fb5" strokeWidth="3" />
      <path d="M255 357V545M255 579V682M255 716V902M1034 54V392M1034 426V528M1034 564V902" stroke="#b6b6ff" strokeWidth="5" />
      <path
        d="M76 584H142V512H371V584H708V207H1364V748H76ZM191 512V748M323 512V748M798 207V371H1274V207M855 371V748M1210 371V748M1241 371V748"
        stroke="#000" strokeWidth="5"
      />
    </g>
    <g transform="translate(297 445) scale(.33333)">
      <path d="M315 197V396M315 430V465M315 500V698M1095 45V168M1095 205V237M1095 273V396M1095 430V465M1095 500V624M1095 658V692M1095 727V850" stroke="#b8b8b8" strokeWidth="5" />
      <path d="M64 448H262M300 448H342M368 448H574M609 448H643M677 448H885M919 448H1270M1281 448H1497" stroke="#777" strokeWidth="4" />
      <g stroke="#000" strokeWidth="5" strokeLinejoin="round">
        <path d="M1079 122L1152 126L1225 148L1290 184L1348 238L1388 300L1414 373L1424 448L1414 523L1388 598L1348 658L1290 713L1225 748L1152 771L1079 775L1003 763L932 733L870 686L824 630L787 560L770 488V410L787 340L824 265L870 210L932 165L1003 133Z" />
        <path d="M1050 216L1113 211L1177 224L1235 255L1280 296L1314 353L1331 412V485L1314 545L1280 599L1235 640L1177 672L1113 685L1047 682L986 659L932 624L893 573L867 512L859 448L867 384L893 325L932 275L986 238Z" />
        <path d="M1270 399L1248 350L1212 309L1164 282L1108 269L1059 272L1006 292L964 326L933 370L917 424V475L933 524L964 571L1006 605L1059 625L1113 629L1166 615L1212 587L1248 546L1269 498H1300V399Z" />
        <path d="M1079 122L1031 128L317 265L285 271L232 289L186 324L154 370L138 424V475L154 524L186 573L232 607L285 626L317 632L1035 770L1079 775" />
        <path d="M317 334L362 344L399 369L424 406L431 448L424 491L399 528L362 554L317 563L272 554L234 528L210 491L203 448L210 406L236 367L274 341Z" />
        <path d="M317 383L349 392L374 417L382 448L374 481L349 505L317 514L285 505L260 479L252 448L260 417L287 391Z" />
      </g>
    </g>
  </svg>
);

/* ---------- status line and floating items ---------- */

const Status = styled.footer`
  flex: none;
  height: 23px;
  padding-left: 3px;
  border-top: 1px solid #a8a8a8;
  border-bottom: 1px solid #b4bcbf;
  font-size: 11px;
  font-weight: 700;
  line-height: 20px;
`;

const ImeBar = styled.div`
  position: fixed;
  right: 72px;
  bottom: 1px;
  display: flex;
  width: 202px;
  height: 26px;
  border: 1px solid #b4cdea;
  border-left: 0;
  background: #fff;
`;

const Watermark = styled.div`
  position: fixed;
  right: 5px;
  bottom: 7px;
  color: rgba(225, 225, 225, 0.85);
  font: 300 38px/56px "Noto Sans CJK SC", sans-serif;
  text-shadow: 1px 1px 1px #8c8c8c;
  pointer-events: none;
`;

const B = "#0b6fd6";
const ime = [
  { n: "输入法", x: 138, w: 33, art: <g><path d="M142 142L214 127Q220 128 222 136L231 188Q232 197 224 203L168 215Q158 215 154 204L139 151Q138 144 142 142Z" fill="#f4511e" stroke="none" /><text x="186" y="198" textAnchor="middle" fontSize="78" fontWeight="700" fill="#fff" stroke="none" transform="rotate(-12 186 175)" fontFamily="Liberation Sans, sans-serif">S</text></g> },
  { n: "中英文", x: 237, w: 25, art: <text x="273" y="196" textAnchor="middle" fontSize="54" fontWeight="500" fill={B} stroke="none" fontFamily="Inter, sans-serif">A</text> },
  { n: "标点", x: 312, w: 24, art: <g fill={B} stroke="none"><circle cx="336" cy="168" r="6" /><path d="M350 176H362V184Q360 194 350 195V189Q354 188 355 185H350Z" /></g> },
  { n: "语音输入", x: 384, w: 24, art: <g><rect x="409" y="153" width="17" height="29" rx="8" fill={B} stroke="none" /><path d="M402 172Q402 189 417 189Q432 189 432 172M417 189V199" stroke={B} strokeWidth="5" /></g> },
  { n: "软键盘", x: 456, w: 24, art: <g><rect x="470" y="161" width="42" height="32" rx="4" stroke={B} strokeWidth="5" /><path d="M476 171H507M476 180H507M484 188H498" stroke={B} strokeWidth="4" strokeDasharray="6 3" /></g> },
  { n: "皮肤", x: 528, w: 24, art: <g stroke="none"><defs><linearGradient id="shirt" x1="0" y1="0" x2="0" y2="1"><stop offset="0" stopColor="#ff5a6a" /><stop offset=".5" stopColor="#9a5cff" /><stop offset="1" stopColor="#49b3ff" /></linearGradient></defs><path d="M541 160H553Q561 168 570 160H582V175H575V197H548V175H541Z" fill="url(#shirt)" /><circle cx="583" cy="152" r="8" fill="#ff5a4d" /></g> },
  { n: "游戏", x: 600, w: 24, art: <g stroke="none"><path d="M616 163Q634 154 652 163L657 190Q656 198 648 196L642 185H626L620 196Q612 198 612 190Z" fill={B} /><path d="M622 166V178M616 172H628M642 169V170M647 176V177" stroke="#fff" strokeWidth="4" /></g> },
  { n: "工具箱", x: 672, w: 23, art: <g fill={B} stroke="none"><rect x="688" y="160" width="17" height="17" rx="4" /><rect x="709" y="160" width="17" height="17" rx="7" /><rect x="688" y="181" width="17" height="17" rx="4" /><rect x="709" y="181" width="17" height="17" rx="4" /></g> },
];

export default function App() {
  return (
    <Shell>
      <Global />
      <Header>
        <TitleRow>
          <QuickAccess />
          <Title>NX 2406 山涧果子 - 制图</Title>
          <Brand>SIEMENS</Brand>
          <HeaderButton aria-label="最小化"><Art x={1224} w={24} h={28} color="#fff"><path d="M1245 54H1269" strokeWidth="5" /></Art></HeaderButton>
          <HeaderButton aria-label="还原"><Art x={1296} w={23} h={28} color="#fff" sw={4}><path d="M1320 38V26H1345V44H1335M1312 39H1335V55H1312Z" /></Art></HeaderButton>
          <HeaderButton aria-label="关闭"><Art x={1365} w={25} h={28} color="#fff" sw={5}><path d="M1384 23L1415 53M1415 23L1384 53" /></Art></HeaderButton>
        </TitleRow>
        <TabRow>
          {tabs.map((t, i) => (
            <Tab key={t} $file={i === 0} $active={i === 1}>{t}</Tab>
          ))}
          <SearchBox>
            <input type="search" aria-label="搜索" placeholder="搜索 (Ctrl+Space)" />
            <Art x={891} y={94} w={19} h={20} color="#333"><circle cx="928" cy="116" r="16" /><path d="M916 127L911 131M914 129L919 134L904 147Q898 145 898 141L911 129Z" /></Art>
          </SearchBox>
          <HeaderButton aria-label="全屏"><Art x={957} y={84} w={31} h={28} color="#fff"><path d="M985 111V100H998M1018 100H1031V111M1031 135V146H1018M998 146H985V135" /></Art></HeaderButton>
          <HeaderButton aria-label="折叠功能区"><Art x={1050} y={84} w={26} h={28} color="#fff"><path d="M1062 135L1086 112L1110 135" /></Art></HeaderButton>
          <HeaderButton aria-label="帮助"><Art x={1128} y={84} w={25} h={28} color="#fff"><circle cx="1162" cy="122" r="21" /><path d="M1155 118Q1155 110 1162 110Q1170 110 1169 118Q1168 122 1163 125V129M1163 133V136" /></Art></HeaderButton>
          <HeaderButton>
            <Art x={1203} y={84} w={25} h={28} color="#fff"><path d="M1218 114L1242 107L1265 115L1242 123ZM1229 119V132Q1242 139 1256 131V118M1222 116V136M1218 136H1226" /></Art>
            <TutorialLabel>教程</TutorialLabel>
          </HeaderButton>
          <HeaderButton aria-label="通知"><Art x={1371} y={84} w={23} h={28} color="#fff" sw={5}><path d="M1398 99V134M1398 140V146" /></Art></HeaderButton>
        </TabRow>
      </Header>

      <RibbonBar />
      <Selection />

      <Work>
        <ResourceBar>
          {resources.map((r, i) => (
            <ResourceButton key={r.n} aria-label={r.n} $first={i === 0} $active={r.active}>
              <Art x={r.x} y={r.y} w={31} h={r.h || 42}>{r.art}</Art>
            </ResourceButton>
          ))}
          <ResourceFill />
        </ResourceBar>
        <Navigator />
        <Stage>
          <DocTabs>
            <DocTab>
              <Art x={39} y={9} w={141} h={25}>
                <path d="M63 33H90V68H63Z" fill="#ddd" stroke={K} /><circle cx="81" cy="53" r="8" fill="#1a6f93" stroke={K} />
                <path d="M110 19H270Q290 20 300 25L440 27Q466 30 467 53Q464 78 440 80H280L270 76H170L160 73H110Q88 70 87 46Q88 22 110 19Z" fill="#fff" stroke="none" />
              </Art>
              <PlainButton aria-label="关闭图纸"><Art w={14} h={25} color="#fff" sw={5}><path d="M6 26L26 46M26 26L6 46" /></Art></PlainButton>
            </DocTab>
          </DocTabs>
          <Sheet>
            <Drawing />
            <SheetName>"SHT1"</SheetName>
          </Sheet>
        </Stage>
      </Work>

      <Status>选择对象并使用 MB3，或双击，或按住并拖动来移动视图、尺寸或注释</Status>
      <ImeBar>
        {ime.map((b) => (
          <PlainButton key={b.n} aria-label={b.n}><Art x={b.x} y={141} w={b.w} h={24}>{b.art}</Art></PlainButton>
        ))}
      </ImeBar>
      <Watermark>CSDN @山涧果子</Watermark>
    </Shell>
  );
}
